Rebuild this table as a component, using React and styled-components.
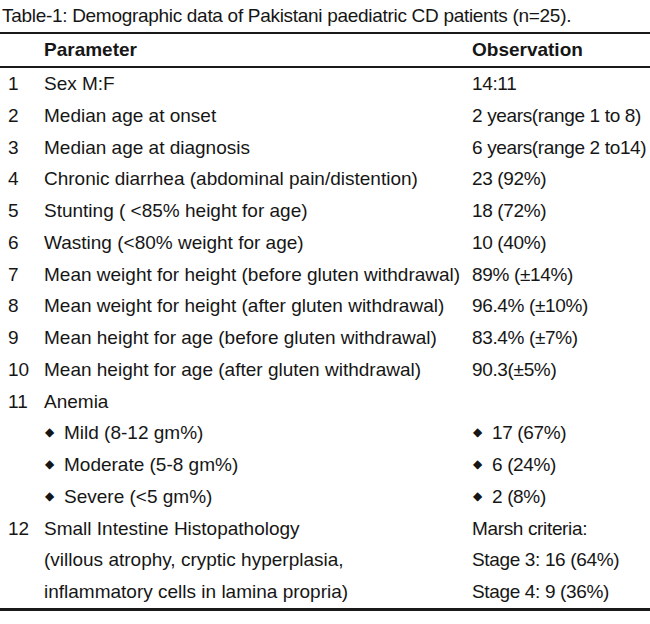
import React from 'react'
import styled, { createGlobalStyle } from 'styled-components'

const GlobalStyle = createGlobalStyle`
  body {
    margin: 0;
    background: #fff;
  }
`

const Page = styled.div`
  width: 650px;
  font-family: 'Liberation Sans', Arial, sans-serif;
  font-size: 19px;
  color: #161616;
`

const Caption = styled.div`
  height: 32px;
  line-height: 32px;
  padding-left: 2px;
  letter-spacing: -0.3px;
  white-space: nowrap;
`

const Table = styled.div`
  border-top: 2px solid #1a1a1a;
  border-bottom: 3px solid #1a1a1a;
`

const Row = styled.div`
  display: grid;
  grid-template-columns: 44px 428px 1fr;
  height: ${p => (p.head ? '32px' : '31.75px')};
  line-height: ${p => (p.head ? '32px' : '31.75px')};
  white-space: nowrap;
  font-weight: ${p => (p.head ? 700 : 400)};
  border-bottom: ${p => (p.head ? '2px solid #1a1a1a' : 'none')};
`

const Num = styled.span`
  padding-left: 8px;
`

const Cell = styled.span`
  letter-spacing: ${p => (p.tight ? '-0.35px' : 'normal')};
`

const Bullet = styled.span`
  display: inline-block;
  font-family: 'DejaVu Sans', sans-serif;
  font-size: 12px;
  width: 19px;
  padding-left: 1px;
  letter-spacing: normal;
  vertical-align: top;
`

const rows = [
  ['1', 'Sex M:F', '14:11'],
  ['2', 'Median age at onset', '2 years(range 1 to 8)'],
  ['3', 'Median age at diagnosis', '6 years(range 2 to14)'],
  ['4', 'Chronic diarrhea (abdominal pain/distention)', '23 (92%)'],
  ['5', 'Stunting ( <85% height for age)', '18 (72%)'],
  ['6', 'Wasting (<80% weight for age)', '10 (40%)'],
  ['7', 'Mean weight for height (before gluten withdrawal)', '89% (±14%)'],
  ['8', 'Mean weight for height (after gluten withdrawal)', '96.4% (±10%)'],
  ['9', 'Mean height for age (before gluten withdrawal)', '83.4% (±7%)'],
  ['10', 'Mean height for age (after gluten withdrawal)', '90.3(±5%)'],
  ['11', 'Anemia', ''],
  ['', 'Mild (8-12 gm%)', '17 (67%)', true],
  ['', 'Moderate (5-8 gm%)', '6 (24%)', true],
  ['', 'Severe (<5 gm%)', '2 (8%)', true],
  ['12', 'Small Intestine Histopathology', 'Marsh criteria:'],
  ['', '(villous atrophy, cryptic hyperplasia,', 'Stage 3: 16 (64%)'],
  ['', 'inflammatory cells in lamina propria)', 'Stage 4: 9 (36%)'],
]

export default function App() {
  return (
    <Page>
      <GlobalStyle />
      <Caption>Table-1: Demographic data of Pakistani paediatric CD patients (n=25).</Caption>
      <Table>
        <Row head>
          <Num />
          <Cell>Parameter</Cell>
          <Cell>Observation</Cell>
        </Row>
        {rows.map(([n, param, obs, bullet], i) => (
          <Row key={i}>
            <Num>{n}</Num>
            <Cell>
              {bullet && <Bullet>◆</Bullet>}
              {param}
            </Cell>
            <Cell tight>
              {bullet && <Bullet>◆</Bullet>}
              {obs}
            </Cell>
          </Row>
        ))}
      </Table>
    </Page>
  )
}
